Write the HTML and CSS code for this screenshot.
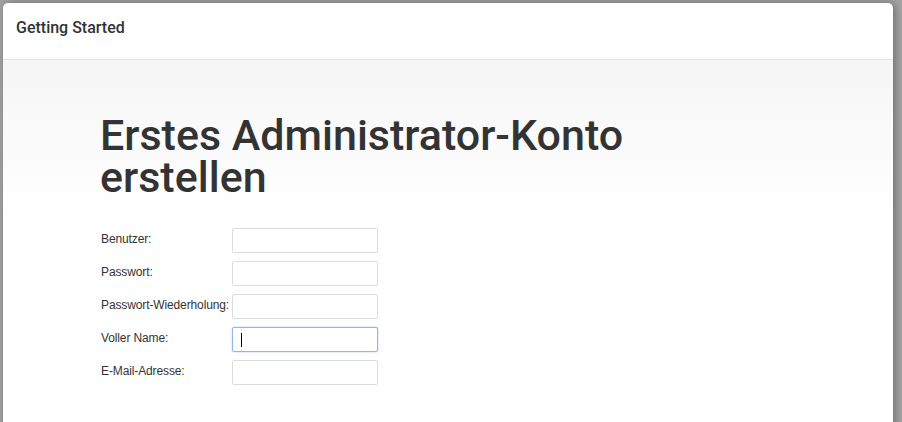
FILE: index.html
```html
<!DOCTYPE html>
<html lang="de">
<head>
<meta charset="utf-8">
<title>Getting Started</title>
<link rel="stylesheet" href="styles.css">
</head>
<body>
<div class="modal">
  <div class="modal-header">
    <h4 class="modal-title">Getting Started</h4>
  </div>
  <div class="modal-body">
    <h1 class="heading">Erstes Administrator-Konto erstellen</h1>
    <table class="form">
      <tr><td class="label">Benutzer:</td><td><input class="field" type="text"></td></tr>
      <tr><td class="label">Passwort:</td><td><input class="field" type="password"></td></tr>
      <tr><td class="label">Passwort-Wiederholung:</td><td><input class="field" type="password"></td></tr>
      <tr><td class="label">Voller Name:</td><td><div class="field focused"><span class="caret"></span></div></td></tr>
      <tr><td class="label">E-Mail-Adresse:</td><td><input class="field" type="text"></td></tr>
    </table>
  </div>
</div>
</body>
</html>
```

FILE: styles.css
```css
html, body {
  margin: 0;
  padding: 0;
  height: 100%;
  overflow: hidden;
}
body {
  background: #a4a4a4;
  font-family: Roboto, "Liberation Sans", sans-serif;
  color: #333;
}
.modal {
  margin: 3px 0 0 3px;
  width: 890px;
  height: 480px;
  background: #fff;
  border-radius: 5px 5px 0 0;
  box-shadow: 2px 0 8px rgba(0, 0, 0, 0.35);
  overflow: hidden;
}
.modal-header {
  box-sizing: border-box;
  height: 57px;
  border-bottom: 1px solid #e5e5e5;
  padding: 14px 13px 0 13px;
}
.modal-title {
  margin: 0;
  font-size: 16px;
  line-height: 22px;
  font-weight: 500;
  color: #333;
}
.modal-body {
  background: linear-gradient(to bottom, #f6f6f6 0px, #ffffff 160px);
  padding: 54px 97px 0 97px;
  height: 420px;
}
.heading {
  margin: 0 0 30px 0;
  font-size: 43px;
  line-height: 42px;
  font-weight: 500;
  color: #333;
  width: 560px;
}
.form {
  border-collapse: collapse;
  font-family: "Liberation Sans", Arial, sans-serif;
  font-size: 12px;
  letter-spacing: -0.12px;
  color: #333;
}
.form td {
  padding: 0 0 8px 0;
  vertical-align: top;
}
.form .label {
  width: 131px;
  padding-left: 1px;
  padding-top: 4px;
}
.field {
  display: block;
  box-sizing: border-box;
  width: 146px;
  height: 25px;
  margin: 0;
  border: 1px solid #dcdcdc;
  border-radius: 2px;
  background: #fff;
  padding: 0 8px;
  outline: none;
}
.field.focused {
  border: 1px solid #93b4f0;
  box-shadow: 0 0 2px rgba(120, 160, 240, 0.6);
  display: flex;
  align-items: center;
}
.caret {
  display: block;
  width: 1px;
  height: 14px;
  background: #000;
}
```
